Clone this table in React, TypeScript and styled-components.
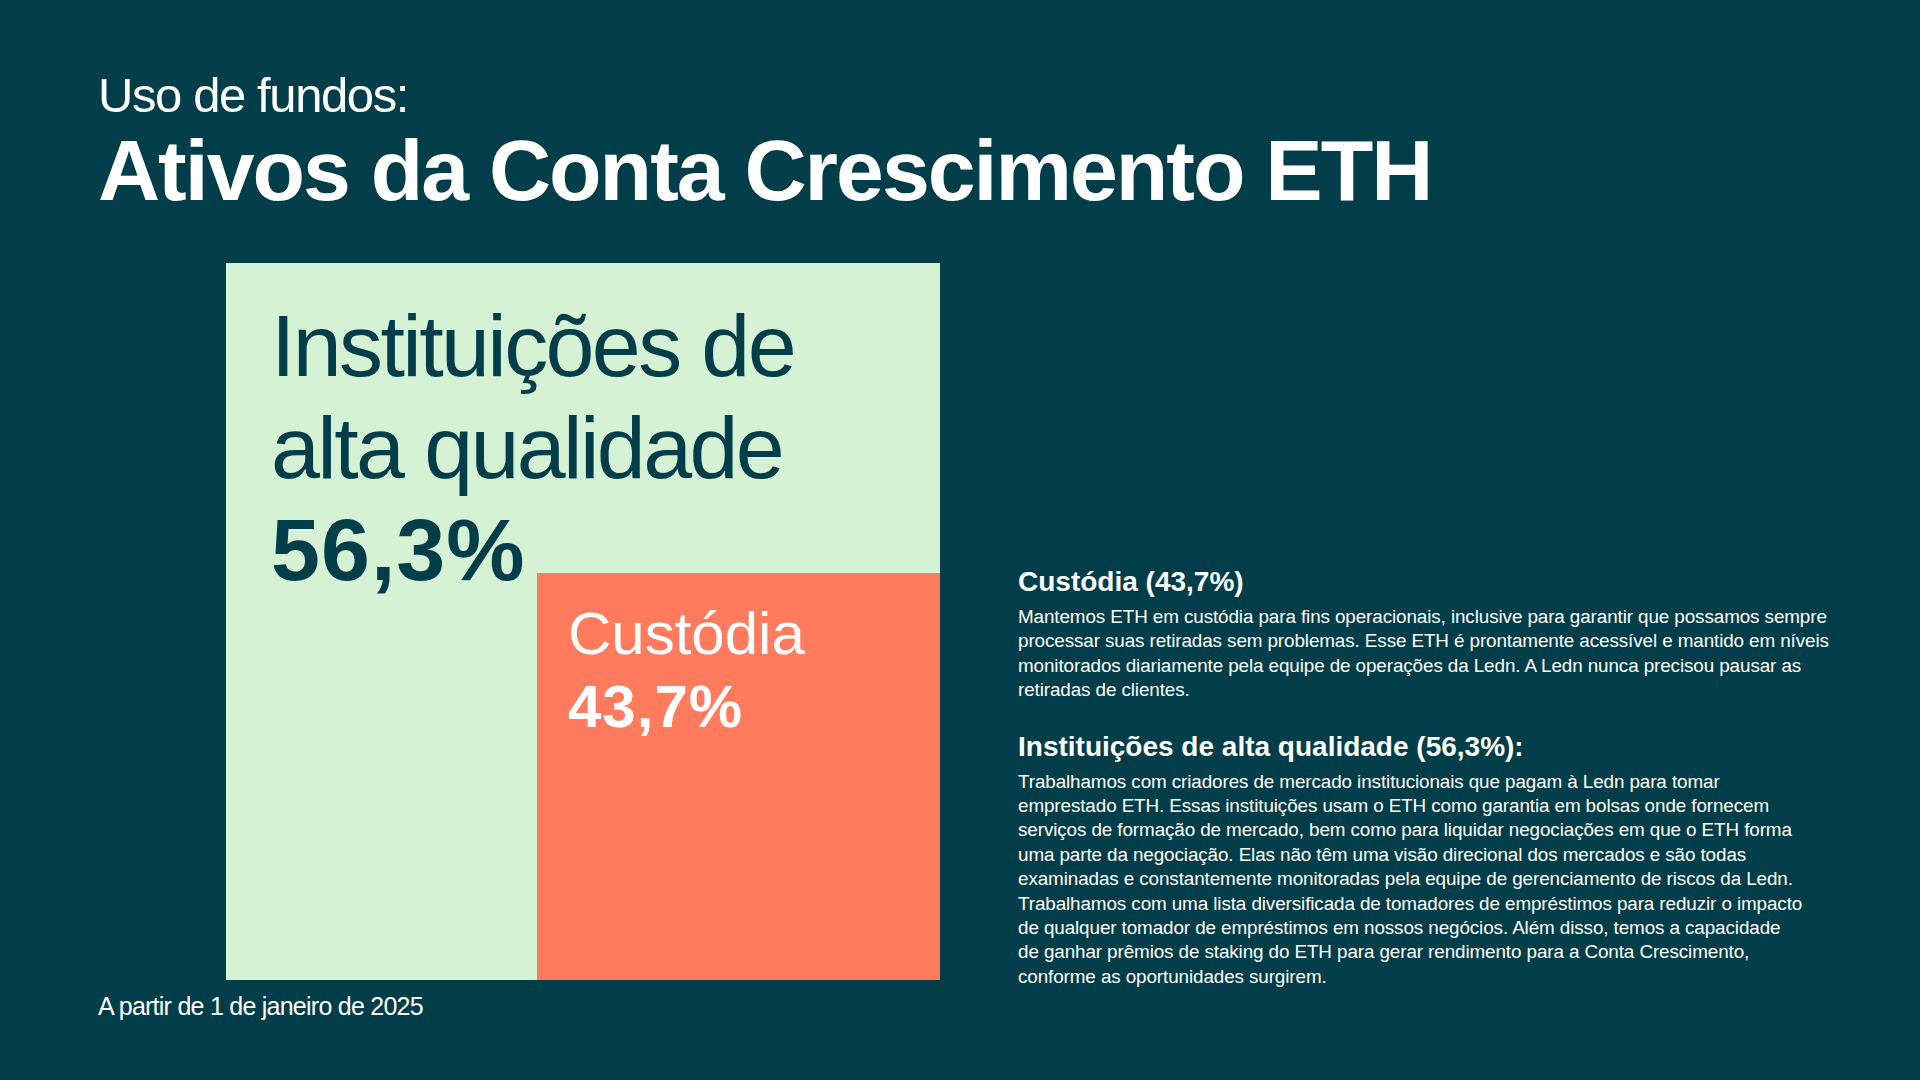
import React from 'react';
import styled, { createGlobalStyle } from 'styled-components';

const GlobalStyle = createGlobalStyle`
  html, body {
    margin: 0;
    padding: 0;
    background: #023d4a;
  }
  * {
    box-sizing: border-box;
  }
`;

const colors = {
  bg: '#023d4a',
  mint: '#d5f2d5',
  coral: '#ff7b5e',
  ink: '#023d4a',
  white: '#ffffff',
};

const Page = styled.main`
  width: 1920px;
  height: 1080px;
  overflow: hidden;
  background: ${colors.bg};
  color: ${colors.white};
  font-family: 'Liberation Sans', Arial, sans-serif;
  padding: 71px 98px 0;
  display: flex;
  flex-direction: column;
`;

const Eyebrow = styled.div`
  font-size: 49px;
  line-height: 49px;
  letter-spacing: -1.4px;
  font-weight: 400;
`;

const Title = styled.h1`
  margin: 7px 0 0;
  font-size: 86px;
  line-height: 86px;
  letter-spacing: -2px;
  font-weight: 700;
`;

const Body = styled.section`
  display: flex;
  align-items: flex-start;
  margin-top: 50px;
`;

const Treemap = styled.div`
  flex-shrink: 0;
  margin-left: 128px;
  width: 714px;
  height: 717px;
  background: ${colors.mint};
  display: grid;
  grid-template-columns: 311px 1fr;
  grid-template-rows: 310px 1fr;
`;

const TileLabel = styled.div<{ $tone: 'dark' | 'light' }>`
  display: flex;
  flex-direction: column;
  color: ${(p) => (p.$tone === 'dark' ? colors.ink : colors.white)};
  white-space: nowrap;
`;

const MainLabel = styled(TileLabel)`
  grid-column: 1 / 3;
  grid-row: 1 / 3;
  padding: 32px 0 0 45px;
  font-size: 88px;
  line-height: 102px;
  letter-spacing: -0.03em;
`;

const CoralTile = styled.div`
  grid-column: 2;
  grid-row: 2;
  z-index: 1;
  background: ${colors.coral};
  padding: 24px 0 0 31px;
`;

const SmallLabel = styled(TileLabel)`
  font-size: 60px;
  line-height: 73px;
`;

const Share = styled.span`
  font-weight: 700;
  letter-spacing: 1px;
`;

const Notes = styled.aside`
  flex-shrink: 0;
  margin: 302px 0 0 78px;
  display: flex;
  flex-direction: column;
  gap: 27px;
`;

const Note = styled.div`
  display: flex;
  flex-direction: column;
  gap: 6px;
`;

const NoteTitle = styled.h3`
  margin: 0;
  font-size: 28px;
  line-height: 34px;
  font-weight: 700;
`;

const NoteText = styled.p`
  margin: 0;
  font-size: 18.85px;
  line-height: 24.4px;
  letter-spacing: -0.1px;
  white-space: nowrap;
  span {
    display: block;
  }
`;

const Footnote = styled.div`
  margin-top: 5px;
  font-size: 25px;
  line-height: 25px;
  letter-spacing: -0.75px;
`;

const notes = [
  {
    title: 'Custódia (43,7%)',
    lines: [
      'Mantemos ETH em custódia para fins operacionais, inclusive para garantir que possamos sempre',
      'processar suas retiradas sem problemas. Esse ETH é prontamente acessível e mantido em níveis',
      'monitorados diariamente pela equipe de operações da Ledn. A Ledn nunca precisou pausar as',
      'retiradas de clientes.',
    ],
  },
  {
    title: 'Instituições de alta qualidade (56,3%):',
    lines: [
      'Trabalhamos com criadores de mercado institucionais que pagam à Ledn para tomar',
      'emprestado ETH. Essas instituições usam o ETH como garantia em bolsas onde fornecem',
      'serviços de formação de mercado, bem como para liquidar negociações em que o ETH forma',
      'uma parte da negociação. Elas não têm uma visão direcional dos mercados e são todas',
      'examinadas e constantemente monitoradas pela equipe de gerenciamento de riscos da Ledn.',
      'Trabalhamos com uma lista diversificada de tomadores de empréstimos para reduzir o impacto',
      'de qualquer tomador de empréstimos em nossos negócios. Além disso, temos a capacidade',
      'de ganhar prêmios de staking do ETH para gerar rendimento para a Conta Crescimento,',
      'conforme as oportunidades surgirem.',
    ],
  },
];

export default function App() {
  return (
    <>
      <GlobalStyle />
      <Page>
        <Eyebrow>Uso de fundos:</Eyebrow>
        <Title>Ativos da Conta Crescimento ETH</Title>
        <Body>
          <Treemap>
            <MainLabel $tone='dark'>
              <span>Instituições de</span>
              <span>alta qualidade</span>
              <Share>56,3%</Share>
            </MainLabel>
            <CoralTile>
              <SmallLabel $tone='light'>
                <span>Custódia</span>
                <Share>43,7%</Share>
              </SmallLabel>
            </CoralTile>
          </Treemap>
          <Notes>
            {notes.map((n) => (
              <Note key={n.title}>
                <NoteTitle>{n.title}</NoteTitle>
                <NoteText>
                  {n.lines.map((l) => (
                    <span key={l}>{l}</span>
                  ))}
                </NoteText>
              </Note>
            ))}
          </Notes>
        </Body>
        <Footnote>A partir de 1 de janeiro de 2025</Footnote>
      </Page>
    </>
  );
}
